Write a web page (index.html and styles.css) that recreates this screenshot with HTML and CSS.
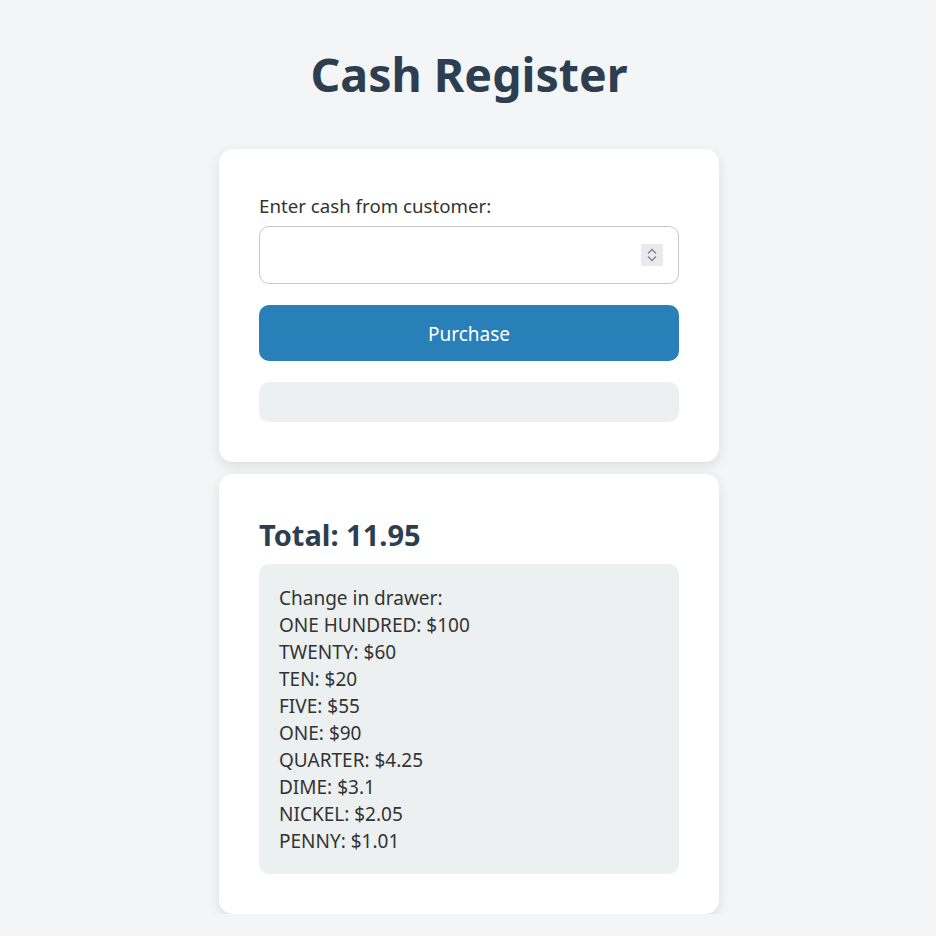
FILE: index.html
```html
<!DOCTYPE html>
<html lang="en">
<head>
<meta charset="utf-8">
<title>Cash Register</title>
<link rel="stylesheet" href="styles.css">
</head>
<body>
<main class="app">
  <h1 class="title">Cash Register</h1>
  <section class="card">
    <label class="label" for="cash">Enter cash from customer:</label>
    <div class="input-wrap">
      <input class="cash-input" id="cash" type="number">
      <span class="spinner" aria-hidden="true">
        <svg width="22" height="22" viewBox="0 0 22 22">
          <path d="M7 9.5 L11 5.5 L15 9.5" fill="none" stroke="#85858d" stroke-width="1.4"/>
          <path d="M7 12.5 L11 16.5 L15 12.5" fill="none" stroke="#85858d" stroke-width="1.4"/>
        </svg>
      </span>
    </div>
    <button class="purchase-btn" id="purchase-btn">Purchase</button>
    <div class="change-due" id="change-due"></div>
  </section>
  <section class="card">
    <h2 class="total">Total: 11.95</h2>
    <div class="drawer">
      <div>Change in drawer:</div>
      <div>ONE HUNDRED: $100</div>
      <div>TWENTY: $60</div>
      <div>TEN: $20</div>
      <div>FIVE: $55</div>
      <div>ONE: $90</div>
      <div>QUARTER: $4.25</div>
      <div>DIME: $3.1</div>
      <div>NICKEL: $2.05</div>
      <div>PENNY: $1.01</div>
    </div>
  </section>
</main>
</body>
</html>
```

FILE: styles.css
```css
* { box-sizing: border-box; }
html, body { margin: 0; padding: 0; }
body {
  background: #f4f5f7;
  font-family: "Noto Sans", "Open Sans", sans-serif;
  color: #333;
  font-size: 19px;
  line-height: 27px;
  padding-left: 2px;
}
.app {
  width: 500px;
  margin: 0 auto;
  padding-top: 45px;
  display: flex;
  flex-direction: column;
  gap: 12px;
}
.title {
  margin: 0 0 34px;
  text-align: center;
  font-size: 46.5px;
  line-height: 58px;
  font-weight: 700;
  color: #2c3e50;
}
.card {
  background: #fff;
  border-radius: 14px;
  padding: 40px;
  box-shadow: 0 4px 12px rgba(0, 0, 0, 0.1);
  display: flex;
  flex-direction: column;
}
.label {
  display: block;
  padding-top: 3px;
  margin-bottom: 7px;
  font-size: 18.7px;
}
.input-wrap {
  position: relative;
  margin-bottom: 21px;
}
.cash-input {
  display: block;
  height: 58px;
  width: 100%;
  border: 1px solid #c8c8c8;
  border-radius: 10px;
  padding: 0 14px;
  font: inherit;
  -moz-appearance: textfield;
}
.cash-input::-webkit-inner-spin-button,
.cash-input::-webkit-outer-spin-button {
  -webkit-appearance: none;
  margin: 0;
}
.spinner {
  position: absolute;
  right: 16px;
  top: 18px;
  width: 22px;
  height: 22px;
  background: #e9e9ee;
  display: block;
}
.spinner svg { display: block; }
.purchase-btn {
  height: 56px;
  border: none;
  border-radius: 10px;
  background: #2980b9;
  color: #fff;
  font: inherit;
  padding-top: 3px;
  margin-bottom: 21px;
}
.change-due {
  height: 40px;
  background: #ecf0f1;
  border-radius: 10px;
}
.total {
  margin: 0 0 12px;
  padding-top: 4px;
  font-size: 29px;
  line-height: 34px;
  font-weight: 700;
  color: #2c3e50;
}
.drawer {
  background: #ecf0f1;
  border-radius: 10px;
  padding: 21px 20px 19px;
}
```
